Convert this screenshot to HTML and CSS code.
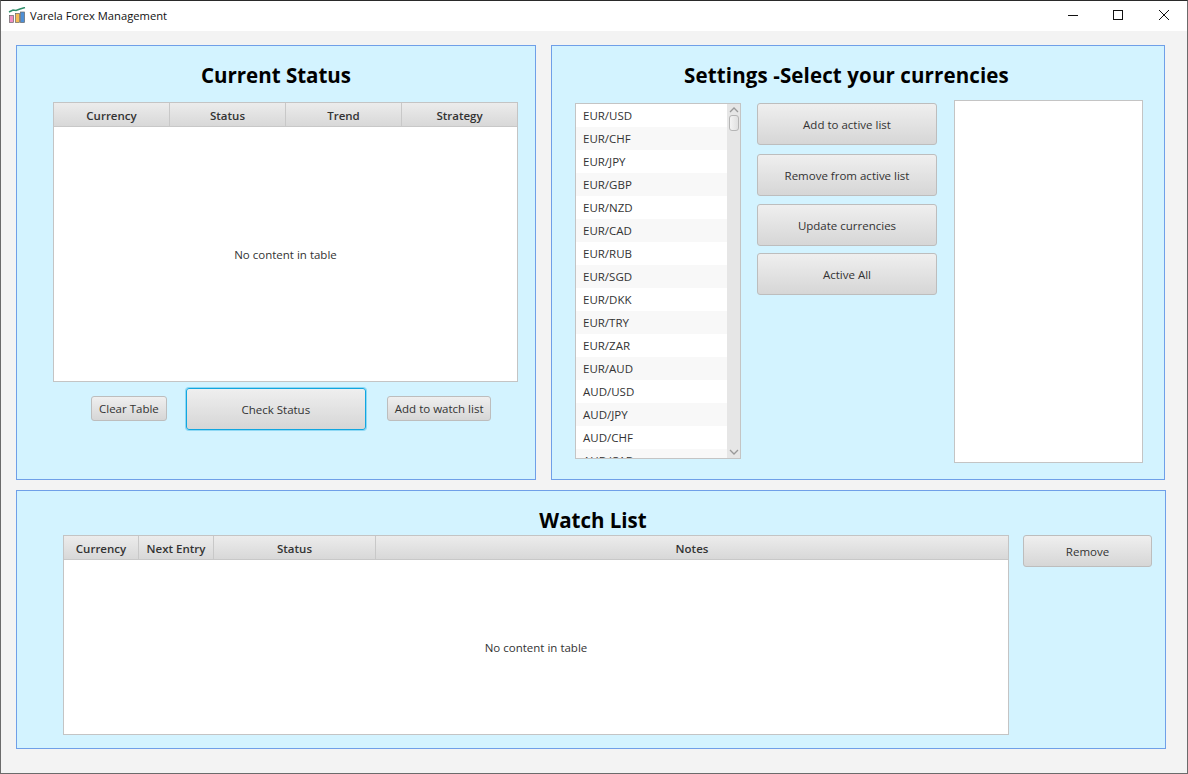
FILE: index.html
```html
<!DOCTYPE html>
<html lang="en">
<head>
    <meta charset="UTF-8">
    <meta name="viewport" content="width=device-width, initial-scale=1.0">
    <title>Varela Forex Management</title>
    <link rel="stylesheet" href="styles.css">
</head>
<body>
    <div class="window">
        <div class="titlebar">
            <svg class="app-icon" width="18" height="18" viewBox="0 0 18 18">
                <rect x="1.500" y="8.500" width="4" height="7" fill="#f08cc0" stroke="#666" stroke-width="0.7"/>
                <rect x="7.500" y="6.500" width="4" height="9" fill="#f5bb55" stroke="#666" stroke-width="0.7"/>
                <rect x="12.500" y="5" width="4" height="10.500" fill="#4d8fd6" stroke="#666" stroke-width="0.7"/>
                <path d="M1 5 L5 3 L8 3.500 L12 2 L17 0.500" fill="none" stroke="#2f8f6a" stroke-width="1.500"/>
            </svg>
            <span class="app-title">Varela Forex Management</span>
            <div class="win-controls">
                <svg class="win-btn" width="10" height="10" viewBox="0 0 10 10"><path d="M0 5.500 H10" stroke="#111" stroke-width="1"/></svg>
                <svg class="win-btn" width="10" height="10" viewBox="0 0 10 10"><rect x="0.500" y="0.500" width="9" height="9" fill="none" stroke="#111" stroke-width="1"/></svg>
                <svg class="win-btn win-close" width="10" height="10" viewBox="0 0 10 10"><path d="M0 0 L10 10 M10 0 L0 10" stroke="#111" stroke-width="1"/></svg>
            </div>
        </div>

        <div class="content">
            <div class="top-row">
                <section class="panel status-panel">
                    <h2 class="heading">Current Status</h2>
                    <div class="table status-table">
                        <div class="table-head">
                            <div class="col col-status">Currency</div>
                            <div class="col col-status">Status</div>
                            <div class="col col-status">Trend</div>
                            <div class="col col-status">Strategy</div>
                        </div>
                        <div class="table-empty">No content in table</div>
                    </div>
                    <div class="status-actions">
                        <button class="btn btn-small">Clear Table</button>
                        <button class="btn btn-focused">Check Status</button>
                        <button class="btn btn-small">Add to watch list</button>
                    </div>
                </section>

                <section class="panel settings-panel">
                    <h2 class="heading">Settings -Select your currencies</h2>
                    <div class="settings-body">
                        <div class="list">
                            <div class="list-items">
                                <div class="list-row">EUR/USD</div>
                                <div class="list-row">EUR/CHF</div>
                                <div class="list-row">EUR/JPY</div>
                                <div class="list-row">EUR/GBP</div>
                                <div class="list-row">EUR/NZD</div>
                                <div class="list-row">EUR/CAD</div>
                                <div class="list-row">EUR/RUB</div>
                                <div class="list-row">EUR/SGD</div>
                                <div class="list-row">EUR/DKK</div>
                                <div class="list-row">EUR/TRY</div>
                                <div class="list-row">EUR/ZAR</div>
                                <div class="list-row">EUR/AUD</div>
                                <div class="list-row">AUD/USD</div>
                                <div class="list-row">AUD/JPY</div>
                                <div class="list-row">AUD/CHF</div>
                                <div class="list-row">AUD/CAD</div>
                            </div>
                            <div class="scrollbar">
                                <svg class="arrow" width="10" height="6" viewBox="0 0 10 6"><path d="M1 5 L5 1 L9 5" fill="none" stroke="#999" stroke-width="1.300"/></svg>
                                <div class="thumb"></div>
                                <svg class="arrow arrow-down" width="10" height="6" viewBox="0 0 10 6"><path d="M1 1 L5 5 L9 1" fill="none" stroke="#999" stroke-width="1.300"/></svg>
                            </div>
                        </div>
                        <div class="settings-actions">
                            <button class="btn btn-large">Add to active list</button>
                            <button class="btn btn-large">Remove from active list</button>
                            <button class="btn btn-large">Update currencies</button>
                            <button class="btn btn-large">Active All</button>
                        </div>
                        <div class="active-list"></div>
                    </div>
                </section>
            </div>

            <section class="panel watch-panel">
                <h2 class="heading">Watch List</h2>
                <div class="watch-body">
                    <div class="table watch-table">
                        <div class="table-head">
                            <div class="col col-w1">Currency</div>
                            <div class="col col-w2">Next Entry</div>
                            <div class="col col-w3">Status</div>
                            <div class="col col-w4">Notes</div>
                        </div>
                        <div class="table-empty">No content in table</div>
                    </div>
                    <button class="btn btn-remove">Remove</button>
                </div>
            </section>
        </div>
    </div>
</body>
</html>
```

FILE: styles.css
```css
* {
    box-sizing: border-box;
}
body {
    margin: 0;
    font-family: "Open Sans", "Noto Sans", sans-serif;
    font-size: 11.5px;
    color: #333;
}
.window {
    width: 1188px;
    height: 774px;
    display: flex;
    flex-direction: column;
    background-color: #f3f3f3;
    border: 1px solid #6b6b6b;
    border-top-color: #2a2a2a;
}
.titlebar {
    height: 30px;
    flex: none;
    display: flex;
    align-items: center;
    padding-left: 7px;
    background-color: #fff;
}
.app-icon {
    margin-right: 4px;
}
.app-title {
    color: #111;
    font-size: 11.2px;
    padding-bottom: 2px;
}
.win-controls {
    margin-left: auto;
    padding: 0 18px 2px 0;
    display: flex;
    gap: 35px;
}
.win-close {
    margin-left: 1px;
}
.content {
    flex: 1;
    padding: 14px 21px 0 15px;
}
.top-row {
    display: flex;
    gap: 15px;
    height: 435px;
    margin-bottom: 10px;
}
.panel {
    background-color: #d3f3ff;
    border: 1px solid #6f9fe8;
}
.heading {
    margin: 0;
    font-size: 20.5px;
    font-weight: 700;
    line-height: 30px;
    color: #000;
    text-align: center;
}

/* panneau statut */
.status-panel {
    width: 520px;
    padding-top: 14px;
}
.status-panel .heading {
    margin-bottom: 12px;
}
.table {
    display: flex;
    flex-direction: column;
    background-color: #fff;
    border: 1px solid #c4c4c4;
}
.status-table {
    width: 465px;
    height: 280px;
    margin-left: 36px;
}
.table-head {
    display: flex;
    height: 24px;
    flex: none;
}
.col {
    display: flex;
    align-items: center;
    justify-content: center;
    padding-top: 1px;
    font-weight: 600;
    background: linear-gradient(#ececec, #d8d8d8);
    border-right: 1px solid #c8c8c8;
    border-bottom: 1px solid #c8c8c8;
    color: #333;
}
.col:last-child {
    border-right: none;
}
.col-status {
    flex: 1;
}
.table-empty {
    flex: 1;
    display: flex;
    align-items: center;
    justify-content: center;
}
.status-actions {
    display: flex;
    align-items: center;
    margin: 6px 0 0 74px;
    height: 42px;
}
.btn {
    font-family: inherit;
    font-size: 11.5px;
    color: #333;
    padding: 0;
    border: 1px solid #bdbdbd;
    border-radius: 3px;
    background: linear-gradient(#efefef, #d6d6d6);
}
.btn-small {
    height: 25px;
    padding: 0 7px;
    margin-bottom: 1px;
}
.btn-focused {
    width: 180px;
    height: 42px;
    margin: 0 21px 0 19px;
    border-color: #11a6e0;
    box-shadow: 0 0 0 1px rgba(17, 166, 224, 0.35);
}

/* panneau reglages */
.settings-panel {
    width: 614px;
    padding-top: 14px;
}
.settings-panel .heading {
    padding-right: 23px;
    margin-bottom: 10px;
    letter-spacing: 0.12px;
}
.settings-body {
    display: flex;
    align-items: flex-start;
    padding-left: 23px;
}
.list {
    width: 166px;
    height: 356px;
    margin-top: 3px;
    display: flex;
    background-color: #fff;
    border: 1px solid #c4c4c4;
    overflow: hidden;
}
.list-items {
    flex: 1;
}
.list-row {
    height: 23px;
    line-height: 23px;
    padding-left: 7px;
}
.list-row:nth-child(even) {
    background-color: #f8f8f8;
}
.scrollbar {
    width: 13px;
    flex: none;
    display: flex;
    flex-direction: column;
    align-items: center;
    padding: 3px 0;
    background-color: #e6e6e6;
}
.arrow {
    flex: none;
}
.arrow-down {
    margin-top: auto;
}
.thumb {
    width: 10px;
    height: 16px;
    margin-top: 2px;
    background: linear-gradient(to right, #f4f4f4, #e0e0e0);
    border: 1px solid #b5b5b5;
    border-radius: 3px;
}
.settings-actions {
    width: 180px;
    margin: 3px 17px 0 16px;
    display: flex;
    flex-direction: column;
}
.btn-large {
    height: 42px;
    flex: none;
}
.btn-large:nth-child(1) {
    margin-bottom: 9px;
}
.btn-large:nth-child(2) {
    margin-bottom: 8px;
}
.btn-large:nth-child(3) {
    margin-bottom: 7px;
}
.active-list {
    width: 189px;
    height: 363px;
    background-color: #fff;
    border: 1px solid #c4c4c4;
}

/* liste de suivi */
.watch-panel {
    height: 259px;
    padding-top: 14px;
}
.watch-panel .heading {
    padding-left: 4px;
}
.watch-body {
    display: flex;
    align-items: flex-start;
    padding-left: 46px;
}
.watch-table {
    width: 946px;
    height: 200px;
}
.watch-table .col {
    padding-top: 2px;
}
.col-w1 {
    width: 75px;
}
.col-w2 {
    width: 75px;
}
.col-w3 {
    width: 162px;
}
.col-w4 {
    flex: 1;
}
.btn-remove {
    width: 129px;
    height: 32px;
    margin-left: 14px;
}
```
